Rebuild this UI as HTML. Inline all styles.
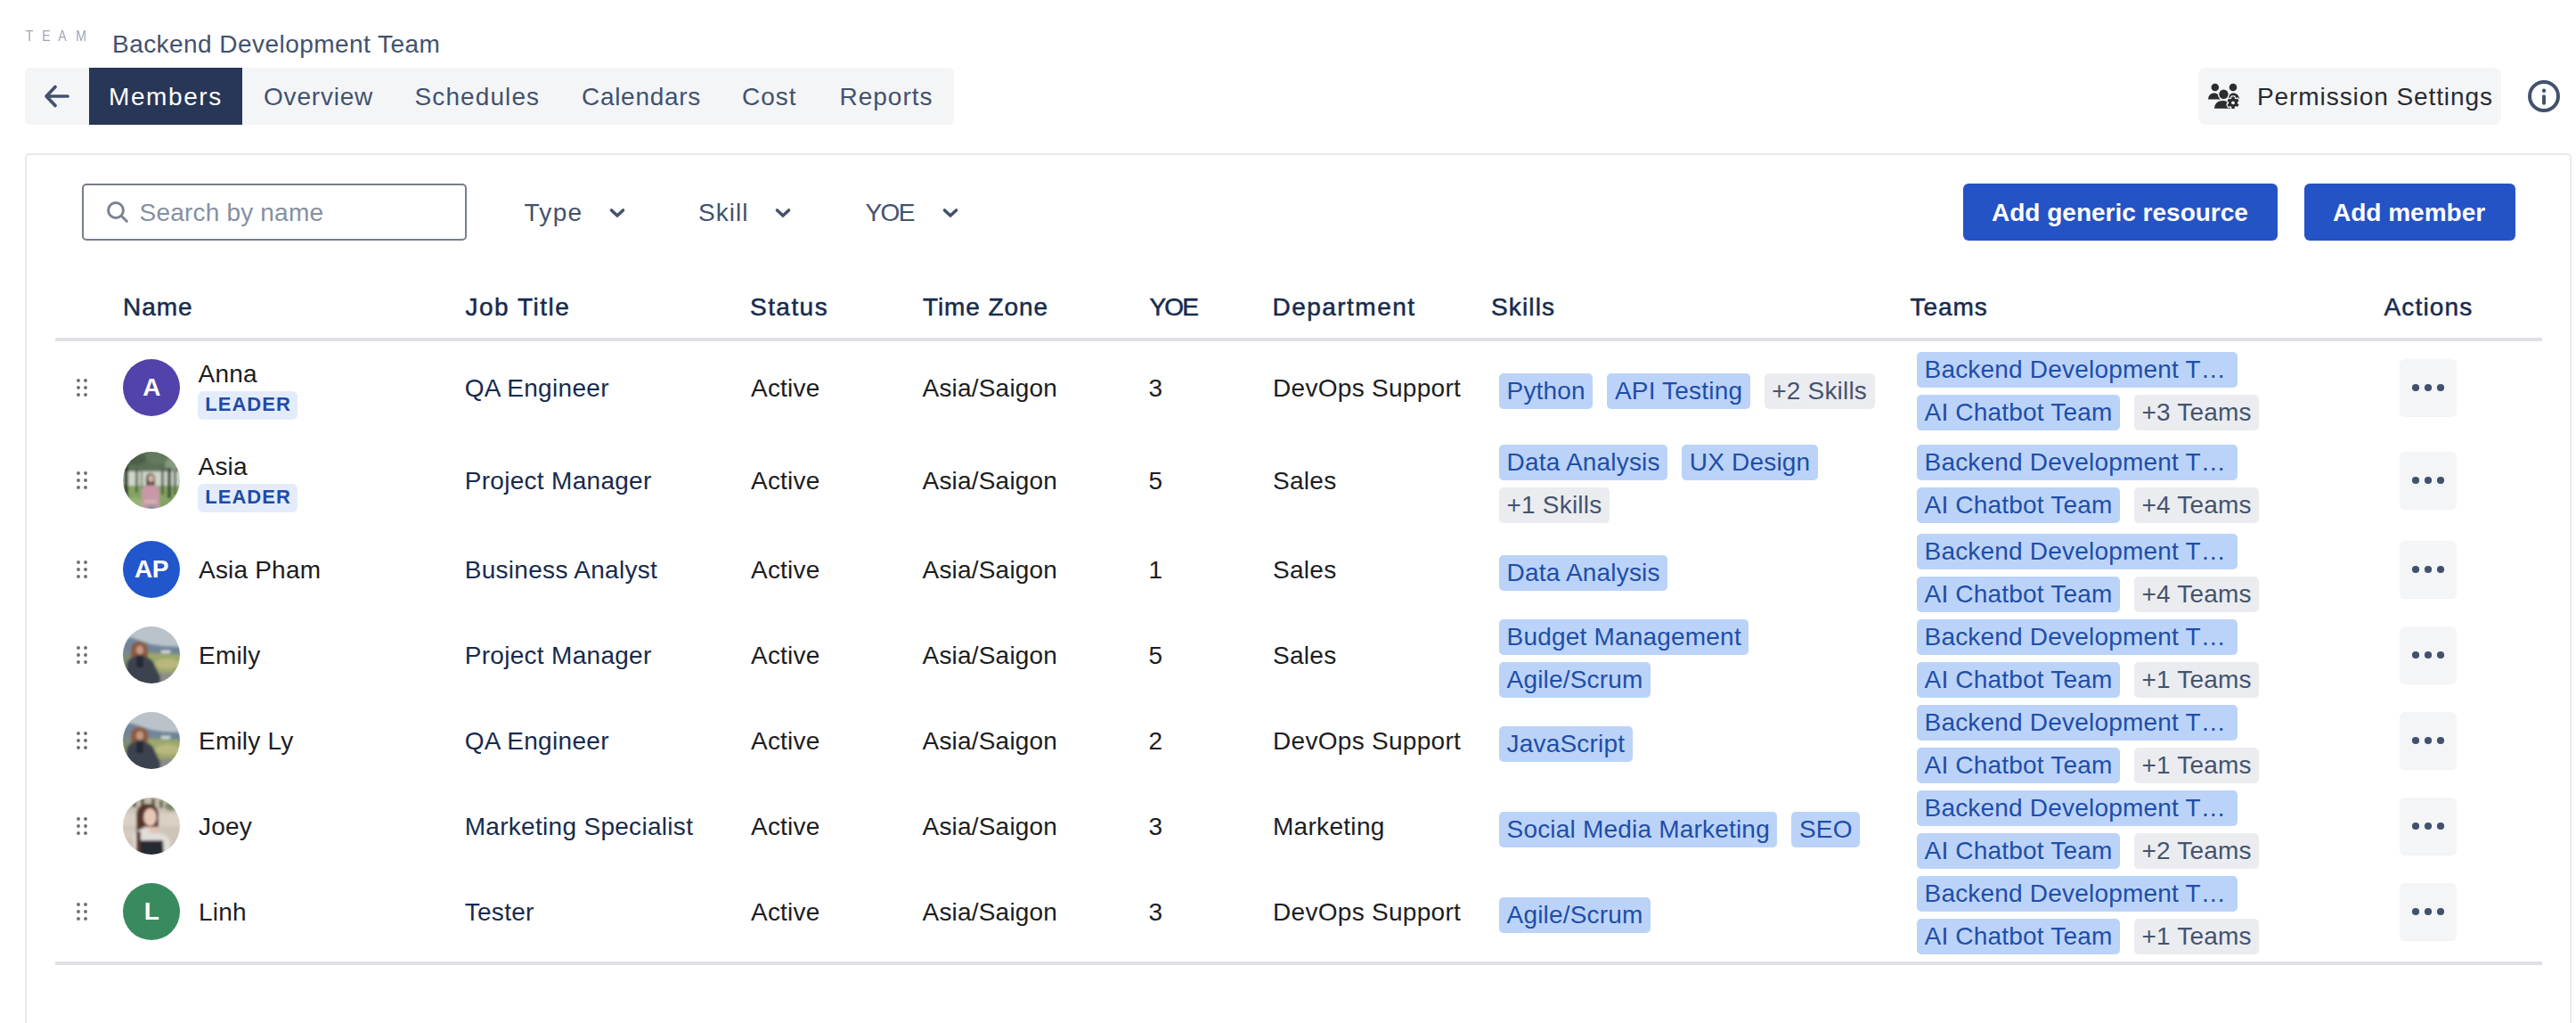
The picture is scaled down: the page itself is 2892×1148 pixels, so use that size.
<!DOCTYPE html><html><head><meta charset="utf-8"><style>
html,body{margin:0;padding:0;background:#fff;width:2892px;height:1148px;overflow:hidden;position:relative;font-family:"Liberation Sans",sans-serif;}
.t{position:absolute;white-space:nowrap;}
.abs{position:absolute;}
.tl{position:absolute;display:flex;gap:16px;}
.tg{height:40px;border-radius:5px;background:#bbd3f8;color:#1f4ea8;font-size:28px;line-height:40px;padding:0 8.5px;letter-spacing:0.2px;white-space:nowrap;box-sizing:border-box;}
.tg.g{background:#ebecef;color:#44546f;}
</style></head><body>
<div class="t" style="left:18px;width:30px;text-align:center;top:30.32px;font-size:16.4px;line-height:20px;color:#9ea4b0;transform:scaleX(0.86)">T</div>
<div class="t" style="left:36.7px;width:30px;text-align:center;top:30.32px;font-size:16.4px;line-height:20px;color:#9ea4b0;transform:scaleX(0.86)">E</div>
<div class="t" style="left:54.8px;width:30px;text-align:center;top:30.32px;font-size:16.4px;line-height:20px;color:#9ea4b0;transform:scaleX(0.86)">A</div>
<div class="t" style="left:75.6px;width:30px;text-align:center;top:30.32px;font-size:16.4px;line-height:20px;color:#9ea4b0;transform:scaleX(0.86)">M</div>
<div class="t " style="left:126px;top:33.60px;font-size:28px;line-height:32px;color:#42526e;font-weight:400;letter-spacing:0.45px;">Backend Development Team</div>
<div class="abs" style="left:28px;top:76px;width:1043px;height:64px;background:#f4f5f7;border-radius:6px;"></div>
<div class="abs" style="left:100px;top:76px;width:172px;height:64px;background:#283757;"></div>
<svg class="abs" style="left:46px;top:92px" width="36" height="32" viewBox="0 0 36 32"><path d="M30 16H6M16 5.5L6 16L16 26.5" fill="none" stroke="#42526e" stroke-width="3.7" stroke-linecap="round" stroke-linejoin="round"/></svg>
<div class="t " style="left:122px;top:92.55px;font-size:28px;line-height:32px;color:#ffffff;font-weight:400;letter-spacing:1.6px;">Members</div>
<div class="t " style="left:296px;top:92.55px;font-size:28px;line-height:32px;color:#42526e;font-weight:400;letter-spacing:0.8px;">Overview</div>
<div class="t " style="left:465.5px;top:92.55px;font-size:28px;line-height:32px;color:#42526e;font-weight:400;letter-spacing:1.1px;">Schedules</div>
<div class="t " style="left:653px;top:92.55px;font-size:28px;line-height:32px;color:#42526e;font-weight:400;letter-spacing:0.7px;">Calendars</div>
<div class="t " style="left:833px;top:92.55px;font-size:28px;line-height:32px;color:#42526e;font-weight:400;letter-spacing:1.0px;">Cost</div>
<div class="t " style="left:942.5px;top:92.55px;font-size:28px;line-height:32px;color:#42526e;font-weight:400;letter-spacing:1.0px;">Reports</div>
<div class="abs" style="left:2468px;top:76px;width:340px;height:64px;background:#f4f5f7;border-radius:8px;"></div>
<svg class="abs" style="left:2470px;top:86px" width="60" height="44" viewBox="0 0 60 44">
<defs><g id="gear"><circle cx="37" cy="29.3" r="5"/><g transform="translate(37 29.3)"><rect x="-1.7" y="-6.7" width="3.4" height="13.4" rx="0.6"/><rect x="-1.7" y="-6.7" width="3.4" height="13.4" rx="0.6" transform="rotate(60)"/><rect x="-1.7" y="-6.7" width="3.4" height="13.4" rx="0.6" transform="rotate(120)"/></g></g></defs>
<g fill="#2c2d30">
<circle cx="16.8" cy="12" r="4.3"/><circle cx="37" cy="12" r="4.3"/>
<path d="M9 25.4C9.3 21 12 18.6 15.8 18.6C19.5 18.6 22 21 22.5 25.4Z"/>
<path d="M31 25.4C31.5 21 34 18.6 37.5 18.6C41 18.6 43.6 21 44.2 25.4Z"/>
<circle cx="26.45" cy="19.8" r="6.6" fill="#f4f5f7"/><circle cx="26.45" cy="19.8" r="5.2"/>
<path d="M16 35.8C16.3 30.5 19.8 27.1 25.5 27.1C29.5 27.1 32.5 28.8 34 31.5L34 35.8Z" />
<use href="#gear" stroke="#f4f5f7" stroke-width="2.6" fill="#f4f5f7"/>
<use href="#gear"/>
<circle cx="37" cy="29.3" r="1.9" fill="#f4f5f7"/>
</g>
</svg>
<div class="t " style="left:2534px;top:93.05px;font-size:28px;line-height:32px;color:#292a2e;font-weight:400;letter-spacing:0.92px;">Permission Settings</div>
<svg class="abs" style="left:2836px;top:88px" width="40" height="40" viewBox="0 0 40 40"><circle cx="20" cy="20" r="16" fill="none" stroke="#42526e" stroke-width="4"/><circle cx="20" cy="13.8" r="2.2" fill="#42526e"/><rect x="18" y="18.2" width="4" height="11.5" rx="2" fill="#42526e"/></svg>
<div class="abs" style="left:28px;top:172px;width:2859px;height:1100px;border:2px solid #e9e9eb;border-radius:5px;box-sizing:border-box;"></div>
<div class="abs" style="left:92px;top:206px;width:432px;height:64px;border:2px solid #777e8c;border-radius:5px;box-sizing:border-box;"></div>
<svg class="abs" style="left:118px;top:224px" width="28" height="28" viewBox="0 0 28 28"><circle cx="12" cy="12" r="8.4" fill="none" stroke="#7c8290" stroke-width="3"/><path d="M18.2 18.2L24.3 24.3" stroke="#7c8290" stroke-width="3" stroke-linecap="round"/></svg>
<div class="t " style="left:156.5px;top:223.00px;font-size:28px;line-height:32px;color:#8590a2;font-weight:400;letter-spacing:0.2px;">Search by name</div>
<div class="t " style="left:588.5px;top:222.90px;font-size:28px;line-height:32px;color:#42526e;font-weight:400;letter-spacing:1.3px;">Type</div>
<svg class="abs" style="left:683px;top:229px" width="20" height="20" viewBox="0 0 20 20"><path d="M3.5 7L10 13L16.5 7" fill="none" stroke="#42526e" stroke-width="3.6" stroke-linecap="round" stroke-linejoin="round"/></svg>
<div class="t " style="left:784px;top:222.90px;font-size:28px;line-height:32px;color:#42526e;font-weight:400;letter-spacing:1.05px;">Skill</div>
<svg class="abs" style="left:869px;top:229px" width="20" height="20" viewBox="0 0 20 20"><path d="M3.5 7L10 13L16.5 7" fill="none" stroke="#42526e" stroke-width="3.6" stroke-linecap="round" stroke-linejoin="round"/></svg>
<div class="t " style="left:971.5px;top:222.90px;font-size:28px;line-height:32px;color:#42526e;font-weight:400;letter-spacing:-1.6px;">YOE</div>
<svg class="abs" style="left:1057px;top:229px" width="20" height="20" viewBox="0 0 20 20"><path d="M3.5 7L10 13L16.5 7" fill="none" stroke="#42526e" stroke-width="3.6" stroke-linecap="round" stroke-linejoin="round"/></svg>
<div class="abs" style="left:2204px;top:206px;width:353px;height:64px;background:#2453c6;border-radius:6px;"></div>
<div class="abs" style="left:2587px;top:206px;width:237px;height:64px;background:#2453c6;border-radius:6px;"></div>
<div class="t " style="left:2236px;top:222.80px;font-size:28px;line-height:32px;color:#ffffff;font-weight:700;letter-spacing:0px;">Add generic resource</div>
<div class="t " style="left:2619px;top:222.80px;font-size:28px;line-height:32px;color:#ffffff;font-weight:700;letter-spacing:0px;">Add member</div>
<div class="t " style="left:138px;top:328.90px;font-size:28px;line-height:32px;color:#172b4d;font-weight:400;letter-spacing:1.0px;-webkit-text-stroke:0.5px #172b4d;">Name</div>
<div class="t " style="left:522.5px;top:328.90px;font-size:28px;line-height:32px;color:#172b4d;font-weight:400;letter-spacing:1.5px;-webkit-text-stroke:0.5px #172b4d;">Job Title</div>
<div class="t " style="left:842px;top:328.90px;font-size:28px;line-height:32px;color:#172b4d;font-weight:400;letter-spacing:1.45px;-webkit-text-stroke:0.5px #172b4d;">Status</div>
<div class="t " style="left:1036px;top:328.90px;font-size:28px;line-height:32px;color:#172b4d;font-weight:400;letter-spacing:0.9px;-webkit-text-stroke:0.5px #172b4d;">Time Zone</div>
<div class="t " style="left:1290.5px;top:328.90px;font-size:28px;line-height:32px;color:#172b4d;font-weight:400;letter-spacing:-1.9px;-webkit-text-stroke:0.5px #172b4d;">YOE</div>
<div class="t " style="left:1428.5px;top:328.90px;font-size:28px;line-height:32px;color:#172b4d;font-weight:400;letter-spacing:1.47px;-webkit-text-stroke:0.5px #172b4d;">Department</div>
<div class="t " style="left:1674px;top:328.90px;font-size:28px;line-height:32px;color:#172b4d;font-weight:400;letter-spacing:1.15px;-webkit-text-stroke:0.5px #172b4d;">Skills</div>
<div class="t " style="left:2144.5px;top:328.90px;font-size:28px;line-height:32px;color:#172b4d;font-weight:400;letter-spacing:0.95px;-webkit-text-stroke:0.5px #172b4d;">Teams</div>
<div class="t " style="left:2676.5px;top:328.90px;font-size:28px;line-height:32px;color:#172b4d;font-weight:400;letter-spacing:1.15px;-webkit-text-stroke:0.5px #172b4d;">Actions</div>
<div class="abs" style="left:62px;top:379px;width:2792px;height:4px;background:#dfe1e6;"></div>
<div class="abs" style="left:62px;top:1079px;width:2792px;height:4px;background:#dfe1e6;"></div>
<svg class="abs" style="left:85px;top:424px" width="14" height="22" viewBox="0 0 14 22"><g fill="#6e6e70"><circle cx="3" cy="3" r="1.95"/><circle cx="3" cy="11" r="1.95"/><circle cx="3" cy="19" r="1.95"/><circle cx="11" cy="3" r="1.95"/><circle cx="11" cy="11" r="1.95"/><circle cx="11" cy="19" r="1.95"/></g></svg>
<div class="abs" style="left:138px;top:403px;width:64px;height:64px;border-radius:50%;background:#5243aa;"></div>
<div class="t" style="left:138px;width:64px;text-align:center;top:419.30px;font-size:28px;line-height:32px;color:#fff;font-weight:700;letter-spacing:-0.5px">A</div>
<div class="t " style="left:222.5px;top:403.90px;font-size:28px;line-height:32px;color:#1d1d1f;font-weight:400;letter-spacing:0.2px;">Anna</div>
<div class="abs" style="left:222px;top:439px;width:112px;height:32px;border-radius:6px;background:#e4ecfc;"></div>
<div class="t " style="left:230.2px;top:441.18px;font-size:22px;line-height:25px;color:#1f4aa8;font-weight:700;letter-spacing:1.05px;">LEADER</div>
<div class="t " style="left:521.7px;top:420.00px;font-size:28px;line-height:32px;color:#172b4d;font-weight:400;letter-spacing:0.3px;">QA Engineer</div>
<div class="t " style="left:843px;top:420.00px;font-size:28px;line-height:32px;color:#1d1d1f;font-weight:400;letter-spacing:0.2px;">Active</div>
<div class="t " style="left:1035.5px;top:420.00px;font-size:28px;line-height:32px;color:#1d1d1f;font-weight:400;letter-spacing:0.2px;">Asia/Saigon</div>
<div class="t " style="left:1289.5px;top:420.00px;font-size:28px;line-height:32px;color:#1d1d1f;font-weight:400;letter-spacing:0.2px;">3</div>
<div class="t " style="left:1429px;top:420.00px;font-size:28px;line-height:32px;color:#1d1d1f;font-weight:400;letter-spacing:0.3px;">DevOps Support</div>
<div class="tl" style="left:1683px;top:419.0px"><div class="tg">Python</div><div class="tg">API Testing</div><div class="tg g">+2 Skills</div></div>
<div class="tl" style="left:2152px;top:395px"><div class="tg" style="width:360px">Backend Development T…</div></div>
<div class="tl" style="left:2152px;top:443px"><div class="tg">AI Chatbot Team</div><div class="tg g">+3 Teams</div></div>
<div class="abs" style="left:2694px;top:403px;width:64px;height:64px;border-radius:6px;background:#f4f5f7;box-shadow:0 1px 1px rgba(9,30,66,0.06);"></div>
<svg class="abs" style="left:2704px;top:425px" width="44" height="20" viewBox="0 0 44 20"><g fill="#42526e"><circle cx="8" cy="10" r="4.1"/><circle cx="22" cy="10" r="4.1"/><circle cx="36" cy="10" r="4.1"/></g></svg>
<svg class="abs" style="left:85px;top:528px" width="14" height="22" viewBox="0 0 14 22"><g fill="#6e6e70"><circle cx="3" cy="3" r="1.95"/><circle cx="3" cy="11" r="1.95"/><circle cx="3" cy="19" r="1.95"/><circle cx="11" cy="3" r="1.95"/><circle cx="11" cy="11" r="1.95"/><circle cx="11" cy="19" r="1.95"/></g></svg>
<svg class="abs" style="left:138px;top:507px" width="64" height="64" viewBox="0 0 64 64"><clipPath id="c1"><circle cx="32" cy="32" r="32"/></clipPath><g clip-path="url(#c1)"><filter id="b1" x="-20%" y="-20%" width="140%" height="140%"><feGaussianBlur stdDeviation="1.5"/></filter><g filter="url(#b1)">
<rect x="-4" y="-4" width="72" height="72" fill="#a9b9a0"/>
<rect x="-4" y="-4" width="72" height="26" fill="#5c6f56"/>
<ellipse cx="14" cy="8" rx="12" ry="7" fill="#4d5f48"/><ellipse cx="40" cy="6" rx="14" ry="8" fill="#65795d"/><ellipse cx="56" cy="14" rx="9" ry="7" fill="#869a7e"/>
<rect x="-4" y="22" width="72" height="16" fill="#cfd7cb"/>
<rect x="-4" y="38" width="72" height="30" fill="#84a562"/>
<ellipse cx="12" cy="58" rx="14" ry="6" fill="#98b474"/>
<rect x="1" y="14" width="5" height="42" fill="#36432f"/><rect x="14" y="18" width="3" height="28" fill="#4f5d48"/>
<rect x="20" y="20" width="2" height="20" fill="#6a775f"/><rect x="43" y="20" width="3" height="28" fill="#4c5945"/>
<rect x="50" y="18" width="4" height="34" fill="#3a4635"/><rect x="57" y="22" width="3" height="26" fill="#5a6853"/>
<path d="M26 46V30c0-4 2.5-6 5-6s5 2 5 6v16z" fill="#3a2c28"/>
<ellipse cx="31.5" cy="30" rx="3.2" ry="4.2" fill="#d8b6a6"/>
<path d="M21 66V45c0-5 4-8 10-8s10 3 10 8v21z" fill="#c898a8"/>
<rect x="24" y="54" width="14" height="4" fill="#d8b0b0"/>
<rect x="27" y="60" width="10" height="6" fill="#8c8ea0"/>
</g></g></svg>
<div class="t " style="left:222.5px;top:507.90px;font-size:28px;line-height:32px;color:#1d1d1f;font-weight:400;letter-spacing:0.2px;">Asia</div>
<div class="abs" style="left:222px;top:543px;width:112px;height:32px;border-radius:6px;background:#e4ecfc;"></div>
<div class="t " style="left:230.2px;top:545.18px;font-size:22px;line-height:25px;color:#1f4aa8;font-weight:700;letter-spacing:1.05px;">LEADER</div>
<div class="t " style="left:521.7px;top:524.00px;font-size:28px;line-height:32px;color:#172b4d;font-weight:400;letter-spacing:0.3px;">Project Manager</div>
<div class="t " style="left:843px;top:524.00px;font-size:28px;line-height:32px;color:#1d1d1f;font-weight:400;letter-spacing:0.2px;">Active</div>
<div class="t " style="left:1035.5px;top:524.00px;font-size:28px;line-height:32px;color:#1d1d1f;font-weight:400;letter-spacing:0.2px;">Asia/Saigon</div>
<div class="t " style="left:1289.5px;top:524.00px;font-size:28px;line-height:32px;color:#1d1d1f;font-weight:400;letter-spacing:0.2px;">5</div>
<div class="t " style="left:1429px;top:524.00px;font-size:28px;line-height:32px;color:#1d1d1f;font-weight:400;letter-spacing:0.3px;">Sales</div>
<div class="tl" style="left:1683px;top:499.0px"><div class="tg">Data Analysis</div><div class="tg">UX Design</div></div>
<div class="tl" style="left:1683px;top:547.0px"><div class="tg g">+1 Skills</div></div>
<div class="tl" style="left:2152px;top:499px"><div class="tg" style="width:360px">Backend Development T…</div></div>
<div class="tl" style="left:2152px;top:547px"><div class="tg">AI Chatbot Team</div><div class="tg g">+4 Teams</div></div>
<div class="abs" style="left:2694px;top:507px;width:64px;height:64px;border-radius:6px;background:#f4f5f7;box-shadow:0 1px 1px rgba(9,30,66,0.06);"></div>
<svg class="abs" style="left:2704px;top:529px" width="44" height="20" viewBox="0 0 44 20"><g fill="#42526e"><circle cx="8" cy="10" r="4.1"/><circle cx="22" cy="10" r="4.1"/><circle cx="36" cy="10" r="4.1"/></g></svg>
<svg class="abs" style="left:85px;top:628px" width="14" height="22" viewBox="0 0 14 22"><g fill="#6e6e70"><circle cx="3" cy="3" r="1.95"/><circle cx="3" cy="11" r="1.95"/><circle cx="3" cy="19" r="1.95"/><circle cx="11" cy="3" r="1.95"/><circle cx="11" cy="11" r="1.95"/><circle cx="11" cy="19" r="1.95"/></g></svg>
<div class="abs" style="left:138px;top:607px;width:64px;height:64px;border-radius:50%;background:#2256cc;"></div>
<div class="t" style="left:138px;width:64px;text-align:center;top:623.30px;font-size:28px;line-height:32px;color:#fff;font-weight:700;letter-spacing:-0.5px">AP</div>
<div class="t " style="left:223px;top:624.00px;font-size:28px;line-height:32px;color:#1d1d1f;font-weight:400;letter-spacing:0.2px;">Asia Pham</div>
<div class="t " style="left:521.7px;top:624.00px;font-size:28px;line-height:32px;color:#172b4d;font-weight:400;letter-spacing:0.3px;">Business Analyst</div>
<div class="t " style="left:843px;top:624.00px;font-size:28px;line-height:32px;color:#1d1d1f;font-weight:400;letter-spacing:0.2px;">Active</div>
<div class="t " style="left:1035.5px;top:624.00px;font-size:28px;line-height:32px;color:#1d1d1f;font-weight:400;letter-spacing:0.2px;">Asia/Saigon</div>
<div class="t " style="left:1289.5px;top:624.00px;font-size:28px;line-height:32px;color:#1d1d1f;font-weight:400;letter-spacing:0.2px;">1</div>
<div class="t " style="left:1429px;top:624.00px;font-size:28px;line-height:32px;color:#1d1d1f;font-weight:400;letter-spacing:0.3px;">Sales</div>
<div class="tl" style="left:1683px;top:623.0px"><div class="tg">Data Analysis</div></div>
<div class="tl" style="left:2152px;top:599px"><div class="tg" style="width:360px">Backend Development T…</div></div>
<div class="tl" style="left:2152px;top:647px"><div class="tg">AI Chatbot Team</div><div class="tg g">+4 Teams</div></div>
<div class="abs" style="left:2694px;top:607px;width:64px;height:64px;border-radius:6px;background:#f4f5f7;box-shadow:0 1px 1px rgba(9,30,66,0.06);"></div>
<svg class="abs" style="left:2704px;top:629px" width="44" height="20" viewBox="0 0 44 20"><g fill="#42526e"><circle cx="8" cy="10" r="4.1"/><circle cx="22" cy="10" r="4.1"/><circle cx="36" cy="10" r="4.1"/></g></svg>
<svg class="abs" style="left:85px;top:724px" width="14" height="22" viewBox="0 0 14 22"><g fill="#6e6e70"><circle cx="3" cy="3" r="1.95"/><circle cx="3" cy="11" r="1.95"/><circle cx="3" cy="19" r="1.95"/><circle cx="11" cy="3" r="1.95"/><circle cx="11" cy="11" r="1.95"/><circle cx="11" cy="19" r="1.95"/></g></svg>
<svg class="abs" style="left:138px;top:703px" width="64" height="64" viewBox="0 0 64 64"><clipPath id="c2"><circle cx="32" cy="32" r="32"/></clipPath><g clip-path="url(#c2)"><filter id="b2" x="-20%" y="-20%" width="140%" height="140%"><feGaussianBlur stdDeviation="1.5"/></filter><g filter="url(#b2)">
<rect x="-4" y="-4" width="72" height="72" fill="#b9c3c9"/>
<path d="M-4 18L8 12L20 16L32 20L46 22L68 23V36H-4z" fill="#70849a"/>
<path d="M-4 28L20 26L40 28L68 30V36H-4z" fill="#7a8a88"/>
<path d="M28 30L68 32V68H28z" fill="#9ba86c"/>
<ellipse cx="50" cy="42" rx="14" ry="6" fill="#b7b77e"/>
<rect x="43" y="27" width="10" height="3" fill="#d9dee0"/>
<path d="M27 53L56 52V68H27z" fill="#8e8c88"/>
<path d="M-4 36L10 34V68H-4z" fill="#7d8f6c"/>
<path d="M9 40V26c0-6 4-9 9.5-9s9.5 3 9.5 9v14z" fill="#8a5a3e"/>
<ellipse cx="19" cy="26.5" rx="4" ry="5" fill="#c49a84"/>
<path d="M4 68V44c0-7 6-11 15-11s15 4 17 11l6 12v12z" fill="#3d4250"/>
<rect x="15" y="32" width="8" height="14" fill="#242936"/>
</g></g></svg>
<div class="t " style="left:223px;top:720.00px;font-size:28px;line-height:32px;color:#1d1d1f;font-weight:400;letter-spacing:0.2px;">Emily</div>
<div class="t " style="left:521.7px;top:720.00px;font-size:28px;line-height:32px;color:#172b4d;font-weight:400;letter-spacing:0.3px;">Project Manager</div>
<div class="t " style="left:843px;top:720.00px;font-size:28px;line-height:32px;color:#1d1d1f;font-weight:400;letter-spacing:0.2px;">Active</div>
<div class="t " style="left:1035.5px;top:720.00px;font-size:28px;line-height:32px;color:#1d1d1f;font-weight:400;letter-spacing:0.2px;">Asia/Saigon</div>
<div class="t " style="left:1289.5px;top:720.00px;font-size:28px;line-height:32px;color:#1d1d1f;font-weight:400;letter-spacing:0.2px;">5</div>
<div class="t " style="left:1429px;top:720.00px;font-size:28px;line-height:32px;color:#1d1d1f;font-weight:400;letter-spacing:0.3px;">Sales</div>
<div class="tl" style="left:1683px;top:695.0px"><div class="tg">Budget Management</div></div>
<div class="tl" style="left:1683px;top:743.0px"><div class="tg">Agile/Scrum</div></div>
<div class="tl" style="left:2152px;top:695px"><div class="tg" style="width:360px">Backend Development T…</div></div>
<div class="tl" style="left:2152px;top:743px"><div class="tg">AI Chatbot Team</div><div class="tg g">+1 Teams</div></div>
<div class="abs" style="left:2694px;top:703px;width:64px;height:64px;border-radius:6px;background:#f4f5f7;box-shadow:0 1px 1px rgba(9,30,66,0.06);"></div>
<svg class="abs" style="left:2704px;top:725px" width="44" height="20" viewBox="0 0 44 20"><g fill="#42526e"><circle cx="8" cy="10" r="4.1"/><circle cx="22" cy="10" r="4.1"/><circle cx="36" cy="10" r="4.1"/></g></svg>
<svg class="abs" style="left:85px;top:820px" width="14" height="22" viewBox="0 0 14 22"><g fill="#6e6e70"><circle cx="3" cy="3" r="1.95"/><circle cx="3" cy="11" r="1.95"/><circle cx="3" cy="19" r="1.95"/><circle cx="11" cy="3" r="1.95"/><circle cx="11" cy="11" r="1.95"/><circle cx="11" cy="19" r="1.95"/></g></svg>
<svg class="abs" style="left:138px;top:799px" width="64" height="64" viewBox="0 0 64 64"><clipPath id="c3"><circle cx="32" cy="32" r="32"/></clipPath><g clip-path="url(#c3)"><filter id="b3" x="-20%" y="-20%" width="140%" height="140%"><feGaussianBlur stdDeviation="1.5"/></filter><g filter="url(#b3)">
<rect x="-4" y="-4" width="72" height="72" fill="#b9c3c9"/>
<path d="M-4 18L8 12L20 16L32 20L46 22L68 23V36H-4z" fill="#70849a"/>
<path d="M-4 28L20 26L40 28L68 30V36H-4z" fill="#7a8a88"/>
<path d="M28 30L68 32V68H28z" fill="#9ba86c"/>
<ellipse cx="50" cy="42" rx="14" ry="6" fill="#b7b77e"/>
<rect x="43" y="27" width="10" height="3" fill="#d9dee0"/>
<path d="M27 53L56 52V68H27z" fill="#8e8c88"/>
<path d="M-4 36L10 34V68H-4z" fill="#7d8f6c"/>
<path d="M9 40V26c0-6 4-9 9.5-9s9.5 3 9.5 9v14z" fill="#8a5a3e"/>
<ellipse cx="19" cy="26.5" rx="4" ry="5" fill="#c49a84"/>
<path d="M4 68V44c0-7 6-11 15-11s15 4 17 11l6 12v12z" fill="#3d4250"/>
<rect x="15" y="32" width="8" height="14" fill="#242936"/>
</g></g></svg>
<div class="t " style="left:223px;top:816.00px;font-size:28px;line-height:32px;color:#1d1d1f;font-weight:400;letter-spacing:0.2px;">Emily Ly</div>
<div class="t " style="left:521.7px;top:816.00px;font-size:28px;line-height:32px;color:#172b4d;font-weight:400;letter-spacing:0.3px;">QA Engineer</div>
<div class="t " style="left:843px;top:816.00px;font-size:28px;line-height:32px;color:#1d1d1f;font-weight:400;letter-spacing:0.2px;">Active</div>
<div class="t " style="left:1035.5px;top:816.00px;font-size:28px;line-height:32px;color:#1d1d1f;font-weight:400;letter-spacing:0.2px;">Asia/Saigon</div>
<div class="t " style="left:1289.5px;top:816.00px;font-size:28px;line-height:32px;color:#1d1d1f;font-weight:400;letter-spacing:0.2px;">2</div>
<div class="t " style="left:1429px;top:816.00px;font-size:28px;line-height:32px;color:#1d1d1f;font-weight:400;letter-spacing:0.3px;">DevOps Support</div>
<div class="tl" style="left:1683px;top:815.0px"><div class="tg">JavaScript</div></div>
<div class="tl" style="left:2152px;top:791px"><div class="tg" style="width:360px">Backend Development T…</div></div>
<div class="tl" style="left:2152px;top:839px"><div class="tg">AI Chatbot Team</div><div class="tg g">+1 Teams</div></div>
<div class="abs" style="left:2694px;top:799px;width:64px;height:64px;border-radius:6px;background:#f4f5f7;box-shadow:0 1px 1px rgba(9,30,66,0.06);"></div>
<svg class="abs" style="left:2704px;top:821px" width="44" height="20" viewBox="0 0 44 20"><g fill="#42526e"><circle cx="8" cy="10" r="4.1"/><circle cx="22" cy="10" r="4.1"/><circle cx="36" cy="10" r="4.1"/></g></svg>
<svg class="abs" style="left:85px;top:916px" width="14" height="22" viewBox="0 0 14 22"><g fill="#6e6e70"><circle cx="3" cy="3" r="1.95"/><circle cx="3" cy="11" r="1.95"/><circle cx="3" cy="19" r="1.95"/><circle cx="11" cy="3" r="1.95"/><circle cx="11" cy="11" r="1.95"/><circle cx="11" cy="19" r="1.95"/></g></svg>
<svg class="abs" style="left:138px;top:895px" width="64" height="64" viewBox="0 0 64 64"><clipPath id="c4"><circle cx="32" cy="32" r="32"/></clipPath><g clip-path="url(#c4)"><filter id="b4" x="-20%" y="-20%" width="140%" height="140%"><feGaussianBlur stdDeviation="1.5"/></filter><g filter="url(#b4)">
<rect x="-4" y="-4" width="72" height="72" fill="#cdc5b8"/>
<rect x="-4" y="-4" width="72" height="16" fill="#c2bda8"/>
<rect x="11" y="2" width="4" height="9" fill="#5e5e52"/><rect x="20" y="1" width="4" height="9" fill="#5a5a4e"/><rect x="32" y="1" width="4" height="9" fill="#5a5a4e"/><rect x="41" y="3" width="4" height="9" fill="#6a6a5c"/>
<ellipse cx="54" cy="10" rx="7" ry="5" fill="#7b8a68"/>
<rect x="-4" y="18" width="72" height="14" fill="#d9d1c4"/>
<rect x="-4" y="36" width="20" height="10" fill="#d6cdbf"/>
<path d="M15 56V20c0-9 5-13 12.5-13S40 11 40 20v34z" fill="#56342a"/>
<ellipse cx="30.5" cy="22" rx="7.2" ry="10" fill="#e8c9b9"/>
<path d="M23 48V33h17v15z" fill="#e2c3b3"/>
<path d="M12 68V42c4-6 10-8 16-8l4 6h8c8 0 13 5 13 12v16z" fill="#e1ddd9"/>
<path d="M18 68l1-20h26l1 20z" fill="#262a33"/>
<path d="M15 62V38h5v24z" fill="#56342a"/>
</g></g></svg>
<div class="t " style="left:223px;top:912.00px;font-size:28px;line-height:32px;color:#1d1d1f;font-weight:400;letter-spacing:0.2px;">Joey</div>
<div class="t " style="left:521.7px;top:912.00px;font-size:28px;line-height:32px;color:#172b4d;font-weight:400;letter-spacing:0.3px;">Marketing Specialist</div>
<div class="t " style="left:843px;top:912.00px;font-size:28px;line-height:32px;color:#1d1d1f;font-weight:400;letter-spacing:0.2px;">Active</div>
<div class="t " style="left:1035.5px;top:912.00px;font-size:28px;line-height:32px;color:#1d1d1f;font-weight:400;letter-spacing:0.2px;">Asia/Saigon</div>
<div class="t " style="left:1289.5px;top:912.00px;font-size:28px;line-height:32px;color:#1d1d1f;font-weight:400;letter-spacing:0.2px;">3</div>
<div class="t " style="left:1429px;top:912.00px;font-size:28px;line-height:32px;color:#1d1d1f;font-weight:400;letter-spacing:0.3px;">Marketing</div>
<div class="tl" style="left:1683px;top:911.0px"><div class="tg">Social Media Marketing</div><div class="tg">SEO</div></div>
<div class="tl" style="left:2152px;top:887px"><div class="tg" style="width:360px">Backend Development T…</div></div>
<div class="tl" style="left:2152px;top:935px"><div class="tg">AI Chatbot Team</div><div class="tg g">+2 Teams</div></div>
<div class="abs" style="left:2694px;top:895px;width:64px;height:64px;border-radius:6px;background:#f4f5f7;box-shadow:0 1px 1px rgba(9,30,66,0.06);"></div>
<svg class="abs" style="left:2704px;top:917px" width="44" height="20" viewBox="0 0 44 20"><g fill="#42526e"><circle cx="8" cy="10" r="4.1"/><circle cx="22" cy="10" r="4.1"/><circle cx="36" cy="10" r="4.1"/></g></svg>
<svg class="abs" style="left:85px;top:1012px" width="14" height="22" viewBox="0 0 14 22"><g fill="#6e6e70"><circle cx="3" cy="3" r="1.95"/><circle cx="3" cy="11" r="1.95"/><circle cx="3" cy="19" r="1.95"/><circle cx="11" cy="3" r="1.95"/><circle cx="11" cy="11" r="1.95"/><circle cx="11" cy="19" r="1.95"/></g></svg>
<div class="abs" style="left:138px;top:991px;width:64px;height:64px;border-radius:50%;background:#3a8a5f;"></div>
<div class="t" style="left:138px;width:64px;text-align:center;top:1007.30px;font-size:28px;line-height:32px;color:#fff;font-weight:700;letter-spacing:-0.5px">L</div>
<div class="t " style="left:223px;top:1008.00px;font-size:28px;line-height:32px;color:#1d1d1f;font-weight:400;letter-spacing:0.2px;">Linh</div>
<div class="t " style="left:521.7px;top:1008.00px;font-size:28px;line-height:32px;color:#172b4d;font-weight:400;letter-spacing:0.3px;">Tester</div>
<div class="t " style="left:843px;top:1008.00px;font-size:28px;line-height:32px;color:#1d1d1f;font-weight:400;letter-spacing:0.2px;">Active</div>
<div class="t " style="left:1035.5px;top:1008.00px;font-size:28px;line-height:32px;color:#1d1d1f;font-weight:400;letter-spacing:0.2px;">Asia/Saigon</div>
<div class="t " style="left:1289.5px;top:1008.00px;font-size:28px;line-height:32px;color:#1d1d1f;font-weight:400;letter-spacing:0.2px;">3</div>
<div class="t " style="left:1429px;top:1008.00px;font-size:28px;line-height:32px;color:#1d1d1f;font-weight:400;letter-spacing:0.3px;">DevOps Support</div>
<div class="tl" style="left:1683px;top:1007.0px"><div class="tg">Agile/Scrum</div></div>
<div class="tl" style="left:2152px;top:983px"><div class="tg" style="width:360px">Backend Development T…</div></div>
<div class="tl" style="left:2152px;top:1031px"><div class="tg">AI Chatbot Team</div><div class="tg g">+1 Teams</div></div>
<div class="abs" style="left:2694px;top:991px;width:64px;height:64px;border-radius:6px;background:#f4f5f7;box-shadow:0 1px 1px rgba(9,30,66,0.06);"></div>
<svg class="abs" style="left:2704px;top:1013px" width="44" height="20" viewBox="0 0 44 20"><g fill="#42526e"><circle cx="8" cy="10" r="4.1"/><circle cx="22" cy="10" r="4.1"/><circle cx="36" cy="10" r="4.1"/></g></svg>
</body></html>
